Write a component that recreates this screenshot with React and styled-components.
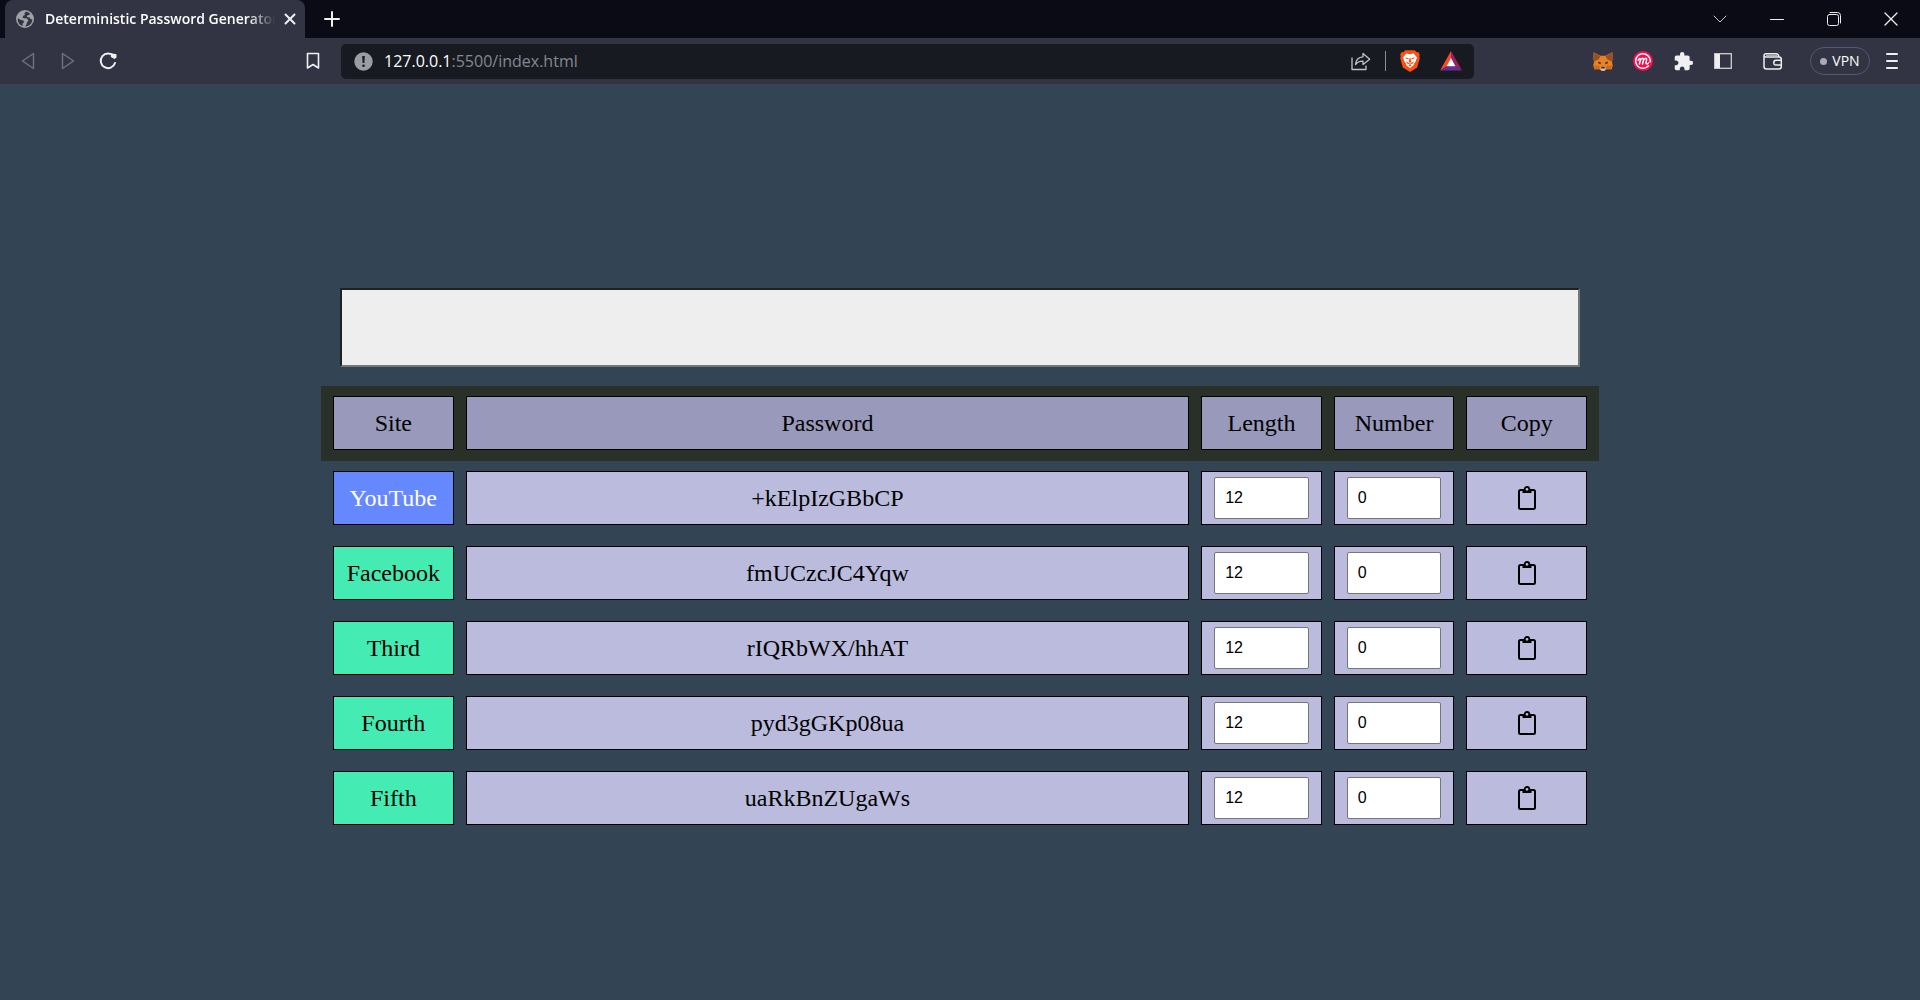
import React, { useState } from "react";
import styled, { createGlobalStyle } from "styled-components";
import { MdExtension } from "react-icons/md";

const GlobalStyle = createGlobalStyle`
  * { box-sizing: border-box; }
  body { margin: 0; background: #334455; }
`;

const uiFont = `"Open Sans", "Noto Sans", sans-serif`;

const Window = styled.div`
  min-height: 100vh;
  display: flex;
  flex-direction: column;
`;

const TitleBar = styled.header`
  display: flex;
  height: 38px;
  padding: 0 1px 0 5px;
  background: #0b0b15;
`;

const PlainButton = styled.button`
  display: flex;
  align-items: center;
  justify-content: center;
  flex: none;
  width: ${(p) => p.$width || 40}px;
  padding: 0;
  border: 0;
  background: none;
  color: #f0f0f0;
`;

const Tab = styled.div`
  display: flex;
  align-items: center;
  width: 300px;
  padding-left: 11px;
  border-radius: 8px 8px 0 0;
  background: #323443;
`;

const TabTitle = styled.span`
  flex: 1;
  margin-left: 11px;
  overflow: hidden;
  white-space: nowrap;
  font: 600 14px/20px ${uiFont};
  color: #fff;
  mask-image: linear-gradient(to right, #000 88%, transparent);
`;

const WindowButtons = styled.div`
  display: flex;
  margin-left: auto;
`;

const Toolbar = styled.nav`
  display: flex;
  align-items: center;
  height: 46px;
  padding: 0 8px;
  background: #323443;
`;

const NavGroup = styled.div`
  display: flex;
  margin-right: 165px;
`;

const AddressBar = styled.div`
  display: flex;
  align-items: center;
  flex: 1;
  height: 35px;
  margin: 0 109px 0 8px;
  padding: 0 2px 0 13px;
  border-radius: 5px;
  background: #181a21;
`;

const Address = styled.span`
  flex: 1;
  margin-left: 11px;
  font: 16px/24px ${uiFont};
  color: #858891;
`;

const Host = styled.span`
  color: #fff;
`;

const Divider = styled.span`
  width: 1px;
  height: 20px;
  margin: 0 4px;
  background: #8b8d93;
`;

const VpnButton = styled.button`
  display: flex;
  align-items: center;
  justify-content: center;
  gap: 5px;
  width: 60px;
  height: 28px;
  margin: 0 2px 0 7px;
  padding: 0;
  border: 1px solid #55586f;
  border-radius: 14px;
  background: none;
  font: 14px/20px ${uiFont};
  color: #fff;
`;

const Dot = styled.span`
  width: 7px;
  height: 7px;
  border-radius: 50%;
  background: #a9abbd;
`;

const Page = styled.main`
  flex: 1;
  display: flex;
  flex-direction: column;
  justify-content: center;
  width: calc(100% * 2 / 3);
  margin: 0 auto;
  padding: 40px 1px 0;
  font: 24px/28px "Liberation Serif", "Times New Roman", serif;
  color: #000;
`;

const SecretInput = styled.input`
  height: 79px;
  margin: 0 19px 19px;
  padding: 0 20px;
  border: 2px solid;
  border-color: #212121 #767676 #767676 #212121;
  background: #eee;
  font: 24px/28px "Liberation Sans", Arial, sans-serif;
`;

const Table = styled.table`
  display: block;
`;

const TableSection = styled.tbody`
  display: block;
`;

const Row = styled.tr`
  display: grid;
  grid-template-columns: minmax(0, 1fr) minmax(0, 6fr) repeat(3, minmax(0, 1fr));
  gap: 12px;
  height: 75px;
  padding: 10px 12px 11px;
  background: ${(p) => (p.$header ? "#283028" : "none")};
`;

const HeadCell = styled.th`
  display: flex;
  align-items: center;
  justify-content: center;
  border: 1px solid #000;
  background: #9999bb;
  font-weight: 400;
`;

const SiteCell = styled(HeadCell)`
  background: ${(p) => (p.$active ? "#6688ff" : "#44ecb4")};
  color: ${(p) => (p.$active ? "#fff" : "#000")};
`;

const Cell = styled.td`
  display: flex;
  align-items: center;
  justify-content: center;
  padding: ${(p) => (p.$field ? "5px 12px" : "0")};
  border: 1px solid #000;
  background: #bbbbdd;
`;

const NumberField = styled.input`
  width: 100%;
  height: 42px;
  padding: 0 10px;
  border: 1px solid #767676;
  border-radius: 2px;
  background: #fff;
  font: 16px/20px "Liberation Sans", Arial, sans-serif;
  color: #000;
  appearance: textfield;
  &::-webkit-inner-spin-button { appearance: none; margin: 0; }
`;

const CopyButton = styled.button`
  display: flex;
  align-items: center;
  justify-content: center;
  width: 100%;
  height: 100%;
  padding: 0;
  border: 0;
  background: none;
  color: #000;
`;

const Globe = () => (
  <svg width="18" height="18" viewBox="0 0 18 18">
    <circle cx="9" cy="9" r="9" fill="#a0a1a8" />
    <path d="M10 1.5 8.5 3.2 8.8 5 7 6 6.8 8 11 8.5 12.5 10.5 11 12.5 10.5 14.5 9 16.5C13 16.6 16.3 13.4 16.3 9.5L14.5 9 13.5 7.5 10.8 7 11.5 5.3 14 4.5 13.5 3Z" fill="#323443" />
    <path d="M1.8 8.2 5 10 7.5 10.5 8 12.5 6.5 13.5 6.7 16C3.5 15 1.3 12 1.8 8.2Z" fill="#323443" />
  </svg>
);

const Line = ({ d, w = 14, h = 14, width = 1, color = "currentColor" }) => (
  <svg width={w} height={h} viewBox={`0 0 ${w} ${h}`} fill="none" stroke={color} strokeWidth={width} strokeLinejoin="round" strokeLinecap="round">
    <path d={d} />
  </svg>
);

const Reload = () => (
  <svg width="18" height="18" viewBox="0 0 18 18" fill="none" stroke="currentColor" strokeWidth="2">
    <path d="M14.7 4.2A7.3 7.3 0 1 0 16 11" strokeLinecap="round" />
    <path d="M12 1.2 17.5 2.2V5.5L15.5 7 11.8 5Z" fill="currentColor" stroke="none" />
  </svg>
);

const Info = () => (
  <svg width="19" height="19" viewBox="0 0 19 19">
    <circle cx="9.5" cy="9.5" r="9.2" fill="#9b9da5" />
    <path d="M8.2 4h2.6l-.4 7H8.6Z" fill="#181a21" />
    <circle cx="9.5" cy="13.7" r="1.3" fill="#181a21" />
  </svg>
);

const Share = () => (
  <svg width="20" height="19" viewBox="0 0 20 19" fill="none" stroke="#c2c3c7" strokeWidth="1.3" strokeLinejoin="round">
    <path d="M1 5.5V17.5H15V13.5" />
    <path d="M4.5 12.5C5 7.5 8 5 12 4.8V1.5L18.7 7.2 12 12.5V9.2C8.5 9 6.5 10 4.5 12.5Z" />
  </svg>
);

const Brave = () => (
  <svg width="20" height="22" viewBox="0 0 20 22">
    <path d="M5.3.2h9.4l2 2 1.6-.2 1.5 2.6-.6 1.7.6 1.8-2.6 9.3L10 22 2.8 17.4.2 8.1.8 6.3.2 4.6 1.7 2l1.6.2Z" fill="#fb5011" />
    <path d="M6.3 3.5 10 4.2l3.7-.7 3.3 4-1.5 4.3-1.3 1.5-.8 2.3L10 18l-3.4-2.4-.8-2.3-1.3-1.5L3 7.5Z" fill="#fff" />
    <path d="M4.7 7.4 8.6 8 8.4 9.2 6.3 8.8ZM15.3 7.4 11.4 8l.2 1.2 2.1-.4ZM9.4 8.2h1.2l.7 3.6L10 13l-1.3-1.2ZM6 11.3l2.6 1.5L10 13.7l1.4-.9 2.6-1.5-1.1 2.2-2.9 1-2.9-1ZM8.3 15.2 10 14.6l1.7.6L10 16.4Z" fill="#fb5011" />
  </svg>
);

const Bat = () => (
  <svg width="22" height="20" viewBox="0 0 22 20">
    <path d="M11 0 0 19.5 7 15.3 11 7.5Z" fill="#ff4724" />
    <path d="M11 0 22 19.5 15 15.3 11 7.5Z" fill="#9e1f63" />
    <path d="M0 19.5H22L15 15.3H7Z" fill="#662d91" />
    <path d="M11 7 15.4 15.3H6.6Z" fill="#fff" />
  </svg>
);

const Fox = () => (
  <svg width="20" height="19" viewBox="0 0 20 19">
    <path d="M.8.3 7.5 3.8h5L19.2.3 20 5l-1 5 .8 3.500-1.300 4-4.500-.5L11.500 18.700h-3L6 17l-4.500.5-1.300-4L1 10 0 5Z" fill="#ea8123" />
    <path d="M.8.3 7.500 4.200 5.500 7.500 1 9.500 0 5ZM19.200.3 12.500 4.200 14.500 7.500 19 9.500 20 5Z" fill="#94512a" />
    <path d="M5 9.500 8 10.500 7.500 12.300 5.500 11.500ZM15 9.500 12 10.500 12.500 12.300 14.500 11.500Z" fill="#3b3536" />
    <path d="M6 13.500 7.500 16.500 7 17.500 2 17 .5 13.500ZM14 13.500 12.500 16.500 13 17.500 18 17 19.500 13.500Z" fill="#d66a1e" />
    <path d="M8 14.800h4l.5 2-1 1.900h-3l-1-1.900Z" fill="#d9c9bd" />
    <path d="M8.500 14.800h3l.4 1.600H8.100Z" fill="#252a31" />
  </svg>
);

const Mint = () => (
  <svg width="20" height="20" viewBox="0 0 20 20" fill="none">
    <circle cx="10" cy="10" r="10" fill="#f80f4e" />
    <path d="M15.500 14.800A7.300 7.300 0 1 1 17.200 11" stroke="#fff" strokeWidth="1.400" strokeLinecap="round" />
    <path d="M5.200 9.200C6.200 7 7.800 7 7.300 9.200L6.400 13 7.300 9.600C8.200 6.800 10.900 6.600 10.400 9.200L9.500 13 10.400 9.600C11.300 6.800 14 6.600 13.500 9.200L12.900 11.500C12.600 13.200 14.800 13.300 15.400 12" stroke="#fff" strokeWidth="1.500" strokeLinecap="round" strokeLinejoin="round" />
  </svg>
);

const Panel = () => (
  <svg width="18" height="16" viewBox="0 0 18 16">
    <rect x=".7" y=".7" width="16.600" height="14.600" fill="none" stroke="#cfd0cf" strokeWidth="1.300" />
    <rect x="1" y="1" width="5" height="14" fill="#eee" />
  </svg>
);

const Wallet = () => (
  <svg width="20" height="17" viewBox="0 0 20 17" fill="none" stroke="#eee" strokeWidth="1.500">
    <path d="M1 2.500V13.500Q1 16 3.500 16H16Q18.300 16 18.300 13.500V6.300Q18.300 4 16 4H3Q1 4 1 2.500 1 .8 3 .8H13Q15.500.8 16 4" />
    <path d="M3 2.400H14" stroke="#aaa" />
    <path d="M18.500 7.300H13Q10.800 7.300 10.800 9.700T13 12H18.500" />
  </svg>
);

const Clipboard = () => (
  <svg width="18" height="24" viewBox="0 0 18 24" fill="none" stroke="currentColor">
    <rect x="1" y="4" width="16" height="19" rx="1.500" strokeWidth="2" />
    <path d="M4.500 3.500H13.500V7H4.500Z" fill="currentColor" stroke="none" />
    <circle cx="9" cy="3.300" r="2.300" strokeWidth="1.800" fill="#bbbbdd" />
  </svg>
);

const initialSites = [
  { name: "YouTube", password: "+kElpIzGBbCP", active: true },
  { name: "Facebook", password: "fmUCzcJC4Yqw" },
  { name: "Third", password: "rIQRbWX/hhAT" },
  { name: "Fourth", password: "pyd3gGKp08ua" },
  { name: "Fifth", password: "uaRkBnZUgaWs" },
];

function SiteRow({ site }) {
  const [length, setLength] = useState(12);
  const [number, setNumber] = useState(0);
  return (
    <Row>
      <SiteCell scope="row" $active={site.active}>{site.name}</SiteCell>
      <Cell>{site.password}</Cell>
      <Cell $field>
        <NumberField type="number" aria-label={`${site.name} length`} value={length} onChange={(e) => setLength(e.target.value)} />
      </Cell>
      <Cell $field>
        <NumberField type="number" aria-label={`${site.name} number`} value={number} onChange={(e) => setNumber(e.target.value)} />
      </Cell>
      <Cell>
        <CopyButton aria-label={`Copy ${site.name} password`} onClick={() => navigator.clipboard?.writeText(site.password)}>
          <Clipboard />
        </CopyButton>
      </Cell>
    </Row>
  );
}

export default function App() {
  return (
    <Window>
      <GlobalStyle />
      <TitleBar>
        <Tab>
          <Globe />
          <TabTitle>Deterministic Password Generator</TabTitle>
          <PlainButton $width={30} aria-label="Close tab"><Line w={12} h={12} width={2} d="M1.500 1.500 10.500 10.500M10.500 1.500 1.500 10.500" /></PlainButton>
        </Tab>
        <PlainButton $width={54} aria-label="New tab"><Line w={16} h={16} width={2} d="M8 1V15M1 8H15" /></PlainButton>
        <WindowButtons>
          <PlainButton $width={57} aria-label="Search tabs"><Line h={8} d="M1 1 7 7 13 1" color="#c8c8cc" /></PlainButton>
          <PlainButton $width={57} aria-label="Minimize"><Line h={1} d="M.5 .5H13.500" /></PlainButton>
          <PlainButton $width={57} aria-label="Restore"><Line d="M2.500 2.500H9.500Q11.500 2.500 11.500 4.500V11.500Q11.500 13.500 9.500 13.500H2.500Q.5 13.500 .5 11.500V4.500Q.5 2.500 2.500 2.500ZM3 .5H10.500Q13.500.5 13.500 3.500V11" /></PlainButton>
          <PlainButton $width={57} aria-label="Close"><Line width={1.3} d="M1 1 13 13M13 1 1 13" /></PlainButton>
        </WindowButtons>
      </TitleBar>
      <Toolbar aria-label="Browser toolbar">
        <NavGroup>
          <PlainButton aria-label="Back"><Line w={14} h={18} width={1.4} color="#717381" d="M12.500 1.500V16.500L1.500 9Z" /></PlainButton>
          <PlainButton aria-label="Forward"><Line w={14} h={18} width={1.4} color="#717381" d="M1.500 1.500V16.500L12.500 9Z" /></PlainButton>
          <PlainButton aria-label="Reload"><Reload /></PlainButton>
        </NavGroup>
        <PlainButton aria-label="Bookmark"><Line w={14} h={18} width={1.6} d="M1.500 1.500H12.500V16L7 12.500 1.500 16Z" /></PlainButton>
        <AddressBar>
          <Info />
          <Address role="textbox" tabIndex={0} aria-label="Address"><Host>127.0.0.1</Host>:5500/index.html</Address>
          <PlainButton aria-label="Share"><Share /></PlainButton>
          <Divider />
          <PlainButton aria-label="Brave Shields"><Brave /></PlainButton>
          <PlainButton $width={42} aria-label="Rewards"><Bat /></PlainButton>
        </AddressBar>
        <PlainButton aria-label="Wallet extension"><Fox /></PlainButton>
        <PlainButton aria-label="Extension"><Mint /></PlainButton>
        <PlainButton aria-label="Extensions"><MdExtension size={21} /></PlainButton>
        <PlainButton aria-label="Sidebar"><Panel /></PlainButton>
        <PlainButton $width={60} aria-label="Wallet"><Wallet /></PlainButton>
        <VpnButton><Dot />VPN</VpnButton>
        <PlainButton aria-label="Menu"><Line w={12} h={18} width={2} d="M1 2H11M1 9H11M1 16H11" /></PlainButton>
      </Toolbar>
      <Page>
        <SecretInput type="password" aria-label="Master password" />
        <Table>
          <TableSection as="thead">
            <Row $header>
              {["Site", "Password", "Length", "Number", "Copy"].map((label) => (
                <HeadCell key={label} scope="col">{label}</HeadCell>
              ))}
            </Row>
          </TableSection>
          <TableSection>
            {initialSites.map((site) => <SiteRow key={site.name} site={site} />)}
          </TableSection>
        </Table>
      </Page>
    </Window>
  );
}
